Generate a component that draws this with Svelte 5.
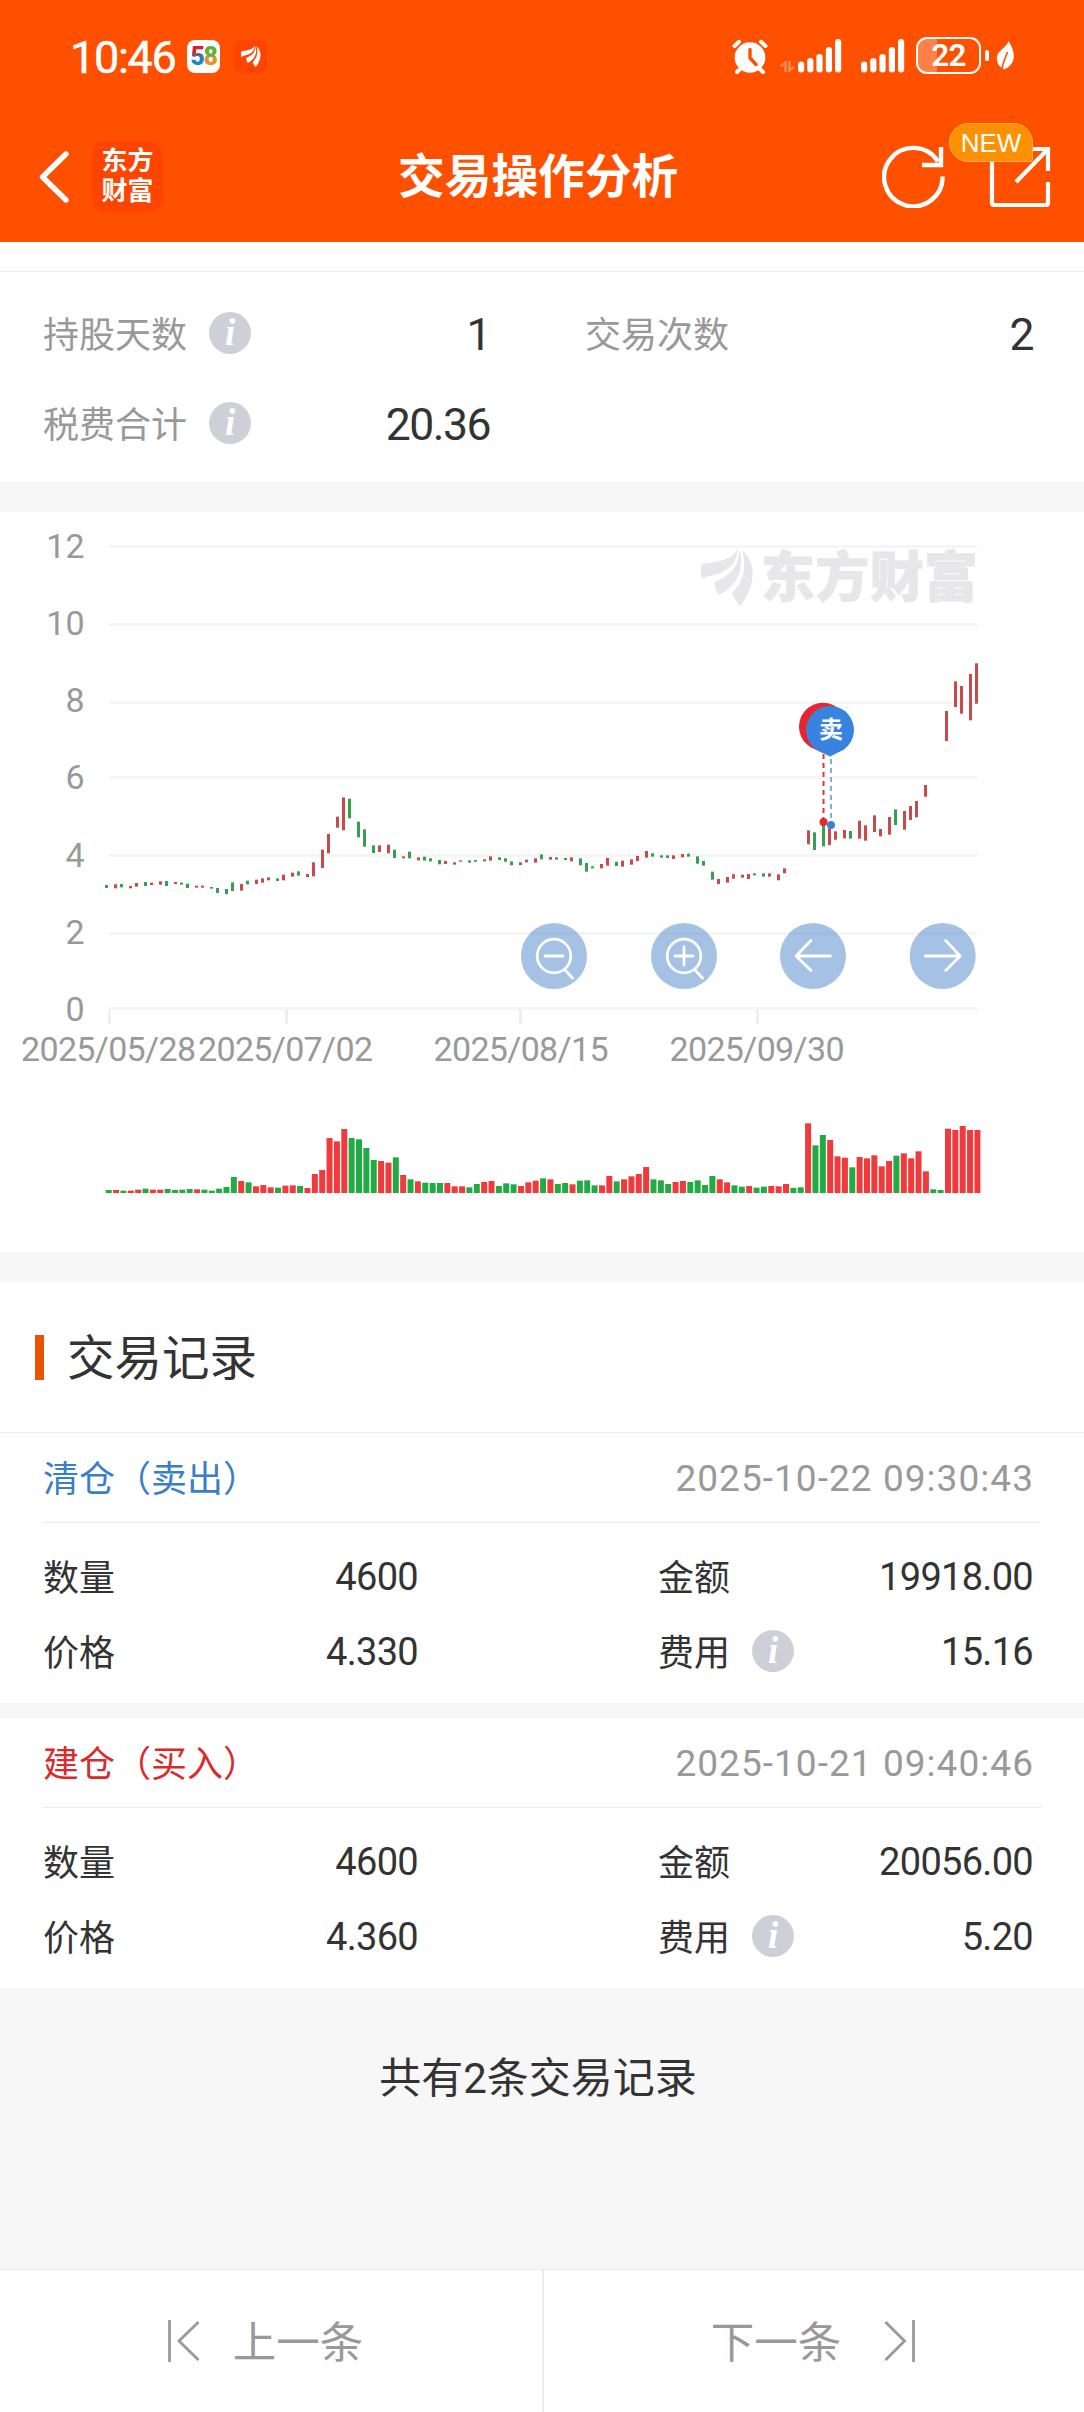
<script>
  const stats = [
    { label: "持股天数", info: true, value: "1" },
    { label: "交易次数", info: false, value: "2" },
    { label: "税费合计", info: true, value: "20.36" },
  ];

  const records = [
    { kind: "sell", title: "清仓（卖出）", time: "2025-10-22 09:30:43", qty: "4600", amount: "19918.00", price: "4.330", fee: "15.16" },
    { kind: "buy", title: "建仓（买入）", time: "2025-10-21 09:40:46", qty: "4600", amount: "20056.00", price: "4.360", fee: "5.20" },
  ];

  const grid = [
    ["12", 34.5], ["10", 112.5], ["8", 190.5], ["6", 265.5], ["4", 343.5], ["2", 421.5], ["0", 496.5],
  ];
  const dates = [
    ["2025/05/28", 109.5, 108.5], ["2025/07/02", 286.5, 285.5], ["2025/08/15", 520.5, 521], ["2025/09/30", 757.5, 757],
  ];

  // candles: x, colour, high-low, in thirds of a pixel from the run's origin
  const runs = [
    { x: 90, y: 268, data: "49g315-324 76r313-325 94g312-322 121r318-325 139r309-320 166g306-318 184r308-315 211r304-314 229g303-318 256r306-312 274g308-314 292g311-324 319r317-323 337r317-323 364g321-326 382g324-339 409g327-342 427g307-333 454r312-332 472g302-313 499r299-312 517r295-308 535r292-301 562g295-303 580r284-301 607r278-290 625g274-287 652r282-291 670r247-289 697r209-264 715r162-220 742r110-143 760r52-151 778g56-115 805g125-172 823g148-200 850g196-219 868r196-216 895r194-220 913g209-234" },
    { x: 400, y: 268, data: "10r229-235 28g215-235 55r232-241 73g230-242 91g235-244 118g240-253 136r243-252 163r247-254 181r241-245 208g241-248 226g240-245 253r238-244 271r229-242 298g232-240 316g235-245 334g244-256 361r247-255 379r239-247 406r235-248 424g223-238 451r231-239 469g232-239 496g234-240 514r232-244 541g235-256 559g249-275 577g259-265 604r252-265 622r234-257 649g245-258 667r242-260 694r238-254 712r228-243 739r213-233 757g220-230 784g226-233 802g226-234 820r226-237 847r222-232 865g221-230 892g229-251 910g243-257 937g275-299 955r297-312" },
    { x: 680, y: 8, data: "142r1071-1088 160r1063-1076 187r1064-1073 205r1062-1077 223g1060-1066 250g1060-1070 268r1060-1070 295r1063-1081 313r1045-1060 385r931-973 403g937-990 430g915-979 448r925-975 466r934-959 493r930-955 511g933-956 538r902-956 556r916-962 583r886-936 601r927-949 628r891-944 646g868-915 673r873-929 691r858-900 709r843-892 736r795-830 799r573-663 826r484-561 844r498-581 871r462-601 889r430-551" },
  ];
  const candles = runs.flatMap((run) =>
    run.data.split(" ").map((item) => {
      const [, x, dir, top, bottom] = item.match(/(\d+)([rg])(\d+)-(\d+)/);
      return { x: Math.floor(run.x + x / 3 - 1), y: run.y + top / 3, h: (bottom - top) / 3, dir };
    })
  );

  // volume bars: height in thirds of a pixel
  const volumes = (
    "g9 r9 g7 r7 r10 g13 r10 r10 g12 g9 g10 g12 r11 g10 g7 g13 g18 g48 r36 g32 r20 r24 r17 g16 r22 r23 g21 r15 r57 r69 " +
    "r165 r155 r192 g165 g161 g135 g99 r96 r91 g107 r54 g41 r35 g31 g30 g30 r30 r20 r20 g17 g27 r33 r36 g21 g29 g26 r21 r32 r37 " +
    "g44 r41 g27 g30 r26 g37 g38 g23 r23 r51 g35 r41 r50 r57 r78 g41 g38 g27 r33 r36 g33 g38 g24 g51 r41 r32 g23 g19 r21 g16 g19 r21 r20 r27 g15 g17 " +
    "r209 g143 g174 r159 r110 r106 g77 r108 r104 r113 r80 r96 g112 r119 r104 r125 r65 g11 g9 r193 r189 r201 r189 r189"
  ).split(" ").map((v, i) => ({ dir: v[0], h: v.slice(1) / 3, x: 105.7 + i * 7.362 }));

  const bars = [[0, 22.5], [9.2, 19], [18.4, 15], [27.8, 8], [37, 0]];
</script>

{#snippet wings()}
  <path d="M1 15C22 13 34 8 36 0C37 14 28 20 19 24C13 26 7 27 1 30C-.5 25-.5 19 1 15Z" />
  <path d="M38 1C42 12 40 22 36 29C33 36 25 42 18 46C15 42 13 37 14 33C28 26 38 20 38 1Z" />
  <path d="M41 1C54 12 57 34 39 57C36 53 32 48 31 44C40 35 47 22 41 1Z" />
{/snippet}

{#snippet signal()}
  <svg class="signal" width="44" height="34" fill="#fff">
    {#each bars as [x, y]}<rect {x} {y} width="6.2" height={33.5 - y} rx="3" />{/each}
  </svg>
{/snippet}

<div class="page">
  <header>
    <div class="statusbar">
      <span class="clock">10:46</span>
      <span class="app58"><b class="five">5</b><b class="eight">8</b></span>
      <span class="appdf"><svg width="20" height="23" viewBox="0 0 53 58" fill="#fff">{@render wings()}</svg></span>
      <span class="spacer"></span>
      <svg class="alarm" width="36" height="36" viewBox="0 0 36 36" stroke="#fff" stroke-linecap="round" fill="none">
        <path d="M2.5 7L7 2.8M33.5 7L29 2.8" stroke-width="4" />
        <path d="M8 30L5 33M28 30L31 33" stroke-width="4" />
        <circle cx="18" cy="18.5" r="15.3" fill="#fff" stroke="none" />
        <path d="M18 10.5V19L24 25.5" stroke="#ff5000" stroke-width="3.4" />
      </svg>
      <svg class="data" width="15" height="11" stroke="#ff8a55" stroke-width="2.6" fill="none">
        <path d="M1 5L5.500 1.500V11M9.500 0V9.500L14 6" />
      </svg>
      {@render signal()}
      {@render signal()}
      <span class="battery"><span>22</span></span>
      <i class="nub"></i>
      <svg class="leaf" width="18" height="29" viewBox="0 0 18 29">
        <path d="M12.500 0C18 8 19 16 16.500 21C14.500 25 11 27.500 7.500 28.500L6.500 26L5 26.500C1 23 0 18 1.500 14C3.500 8.500 10 7 12.500 0Z" fill="#fff" />
        <path d="M11.500 11C9.500 17 7 20 6 28" stroke="#ff5000" stroke-width="1.600" fill="none" />
      </svg>
    </div>
    <nav>
      <svg class="back" width="30" height="54" fill="none" stroke="#fff" stroke-width="5.400" stroke-linecap="round" stroke-linejoin="round">
        <path d="M27 3L3.500 26L27 49" />
      </svg>
      <span class="brand">东方<br />财富</span>
      <h1>交易操作分析</h1>
      <svg class="refresh" width="64" height="64" fill="none" stroke="#fff" stroke-width="4.400">
        <path d="M60.500 32.500A29.200 29.200 0 1 1 56 17.500" />
        <path d="M59 3V21H40" />
      </svg>
      <span class="share">
        <svg width="62" height="62" fill="none" stroke="#fff" stroke-width="4.200">
          <path d="M59 36V57Q59 59 57 59H5Q3 59 3 57V3H59V25M59 3L27 36" />
        </svg>
        <span class="new">NEW</span>
      </span>
    </nav>
  </header>

  <section class="stats">
    {#each stats as s}
      <div class="stat">
        <span class="label">{s.label}</span>
        {#if s.info}<span class="info">i</span>{/if}
        <span class="value">{s.value}</span>
      </div>
    {/each}
  </section>

  <section class="chart">
    <svg width="1084" height="740">
      <g class="axis">
        {#each grid as [label, y], i}
          <rect x="109" y={y - 1.5} width="868.500" height="3" fill="#f5f5f5" />
          <text x="84.500" y={45.700 + i * 77.200} text-anchor="end">{label}</text>
        {/each}
        {#each dates as [label, tick, x]}
          <rect x={tick - 1.5} y="498" width="3" height="14" fill="#eee" />
          <text {x} y="549" text-anchor="middle" textLength="175">{label}</text>
        {/each}
      </g>
      <g fill="#e6e6eb">
        <g transform="translate(701 37)">{@render wings()}</g>
        <text class="mark" x="761" y="85" textLength="217">东方财富</text>
      </g>
      {#each candles as c}
        <rect class={c.dir} x={c.x} y={c.y} width="3" height={c.h} />
      {/each}
      <g class="volume">
        {#each volumes as v}
          <rect class={v.dir} x={v.x} y={681 - v.h} width="6" height={v.h} />
        {/each}
      </g>

      <path d="M823.500 242V308" stroke="#d83a3a" stroke-width="2" stroke-dasharray="5 4" />
      <path d="M831 247V308" stroke="#85abd8" stroke-width="2" stroke-dasharray="5 4" />
      <circle cx="823.500" cy="310" r="4" fill="#e02a2e" />
      <circle cx="831" cy="313" r="4" fill="#3d80d8" />
      <path d="M823 241L811 235.500A24 24 0 1 1 835 235.500Z" fill="#e9252b" />
      <path d="M830 244.500L816 237.500A24 24 0 1 1 844 237.500Z" fill="#3983e0" />
      <text class="pin" x="831" y="226" text-anchor="middle">卖</text>

      <g fill="#4b83c7" fill-opacity=".5">
        {#each [554, 684, 813, 942.7] as cx}<circle {cx} cy="444" r="33" />{/each}
      </g>
      <g class="tool">
        <g transform="translate(554 444)"><circle r="16.800" /><path d="M-9 0H9M10.500 13.500L18.500 22" /></g>
        <g transform="translate(684 444)"><circle r="16.800" /><path d="M-9 0H9M0-9V9M10.500 13.500L18.500 22" /></g>
        <path transform="translate(813 444)" d="M17.500 0H-17M-2-15.500L-17 0L-2 14.500" />
        <path transform="translate(942.7 444)" d="M-17.500 0H17.500M3-15.500L17.500 0L3 14.500" />
      </g>
    </svg>
  </section>

  <section class="records">
    <h2><span>交易记录</span></h2>
    {#each records as r}
      <article>
        <div class="head">
          <span class={r.kind}>{r.title}</span>
          <time>{r.time}</time>
        </div>
        <div class="body">
          <div><span class="name">数量</span><span class="num">{r.qty}</span></div>
          <div><span class="name">金额</span><span class="num">{r.amount}</span></div>
          <div><span class="name">价格</span><span class="num">{r.price}</span></div>
          <div><span class="name">费用</span><span class="info">i</span><span class="num">{r.fee}</span></div>
        </div>
      </article>
    {/each}
  </section>

  <p class="total">共有2条交易记录</p>

  <footer>
    <button>
      <svg width="34" height="44"><path d="M3.500 1V43M32.500 3L13 22L32.500 41" /></svg>
      <span>上一条</span>
    </button>
    <button>
      <span>下一条</span>
      <svg width="34" height="44"><path d="M30.500 1V43M2.500 3L21.500 22L2.500 41" /></svg>
    </button>
  </footer>
</div>

<style>
  :global(body) { background: #f7f7f8; }
  .page {
    display: flex; flex-direction: column;
    width: 1084px; height: 2412px; overflow: hidden;
    background: #f7f7f8; color: #333;
    font-family: Roboto, "Noto Sans CJK SC", sans-serif; font-size: 36px;
  }
  * { box-sizing: border-box; }
  svg { display: block; flex: none; }

  header { height: 242px; flex: none; background: #ff5000; color: #fff; }
  .statusbar { display: flex; align-items: center; height: 113px; padding-left: 70px; padding-right: 70px; }
  .clock { width: 117px; padding-top: 2px; font-size: 45px; font-weight: 400; letter-spacing: -1.3px; -webkit-text-stroke: .5px #fff; }
  .app58, .appdf {
    display: flex; align-items: center; justify-content: center;
    width: 33px; height: 33px; border-radius: 8px;
  }
  .app58 { background: #fff; font: 900 25px/33px Roboto, sans-serif; letter-spacing: -1.5px; }
  .five, .eight { background-clip: text; color: transparent; }
  .five { background-image: linear-gradient(#d8232f 42%, #1787c4 48%); }
  .eight { background-image: linear-gradient(#5cb531 46%, #e8912d 54%); }
  .appdf { margin-left: 14px; background: #ff4400; }
  .spacer { flex: 1; }
  .data { margin: 19px 3px 0 12px; }
  .alarm + .data + .signal { margin-right: 18.500px; }
  .signal { margin-top: -1px; }
  .battery {
    display: flex; align-items: center; justify-content: center;
    width: 65px; height: 37px; margin: -2px 0 0 11.500px;
    border: 2.500px solid #fff; border-radius: 11px;
    background: linear-gradient(90deg, #ff8048 31%, transparent 31%);
    font-size: 31.500px; font-weight: 600; letter-spacing: -.8px;
  }
  .nub { width: 4px; height: 11px; margin: -2px 7px 0 4px; border-radius: 2px; background: #fff; }
  .leaf { margin-top: -3px; }

  nav { display: flex; align-items: center; height: 129px; padding: 0 33px 0 39px; }
  .brand {
    width: 71px; height: 71px; margin: -2px 0 0 23px; padding-top: 5px;
    border-radius: 15px; background: #ff4400;
    font-size: 26px; font-weight: 600; line-height: 30px; text-align: center;
  }
  h1 { margin: -1px 0 0 235px; font-size: 46.700px; font-weight: 700; line-height: 60px; white-space: nowrap; }
  .refresh { margin-left: auto; margin-top: -3px; }
  .share { position: relative; margin: -2px 0 0 43px; }
  .new {
    position: absolute; left: -40px; top: -23px;
    width: 84px; height: 39px; border: 1px solid #ffb060; border-radius: 20px 20px 3px 20px;
    background: #ff9000; font: 26px/38px "Liberation Sans", sans-serif; text-align: center;
  }

  .stats {
    display: grid; grid-template-columns: 447px 448px; grid-auto-rows: 90px; column-gap: 95px;
    height: 240px; flex: none; padding: 46px 43px 0;
    background: linear-gradient(#ebebeb, #ebebeb) 0 29px / 100% 1px no-repeat #fff;
  }
  .stat { display: flex; align-items: center; }
  .label { margin-top: -3px; color: #999; }
  .info {
    width: 42px; height: 42px; margin-left: 22px; border-radius: 50%;
    background: #cdd0d6; color: #fff; text-align: center;
    font: italic 700 37px/41px "Liberation Serif", serif;
  }
  .value { margin-left: auto; padding-top: 3px; font-size: 44.500px; letter-spacing: -1.5px; }

  .chart { height: 740px; flex: none; margin-top: 30px; background: #fff; }
  .axis text { fill: #999; font-size: 34px; }
  .mark { font-size: 54px; font-weight: 900; stroke: #e6e6eb; stroke-width: .8px; }
  .pin { fill: #fff; font-size: 24px; font-weight: 700; }
  .r { fill: #c94a4a; }
  .g { fill: #35a050; }
  .volume .r { fill: #f03a3c; }
  .volume .g { fill: #22aa44; }
  .tool { fill: none; stroke: #fff; stroke-width: 2.800; stroke-linecap: round; stroke-linejoin: round; }

  .records { margin-top: 30px; background: #fff; }
  h2 {
    display: flex; align-items: center; gap: 23px;
    height: 150px; margin: 0; padding-left: 35px;
    font-size: 47.500px; font-weight: 400;
  }
  h2::before { content: ""; width: 9px; height: 45px; background: #e85400; }
  h2 span { margin-top: -5px; }
  article { height: 271px; border-top: 1px solid #ebebeb; }
  article + article { height: 285px; border-top: 15px solid #f7f7f8; }
  .head {
    display: flex; align-items: center; justify-content: space-between;
    height: 90px; margin: 0 43px; padding-right: 8px;
    border-bottom: 1px solid #ebebeb;
  }
  .sell, .buy, .name { margin-top: -3px; }
  .sell { color: #3a7dcc; }
  .buy { color: #d92b2b; }
  time { padding-top: 2px; color: #999; font-size: 37px; letter-spacing: 1.050px; margin-right: -1px; }
  .body { display: grid; grid-template-columns: 375px 375px; column-gap: 240px; grid-auto-rows: 75px; padding: 16px 43px 0; }
  .body div { display: flex; align-items: center; }
  .body .info { margin-top: -1px; }
  .num { margin-left: auto; font-size: 38px; letter-spacing: -.7px; }

  .total { margin: 61px 8px 0 0; text-align: center; font-size: 42px; line-height: 60px; }

  footer { display: grid; grid-template-columns: 1fr 1fr; height: 143px; margin-top: auto; border-top: 1px solid #ebebeb; background: #fff; }
  button {
    display: flex; align-items: center; justify-content: center; gap: 33px;
    padding: 0 13px 0 0; border: 0; background: none; color: #999; font: inherit; font-size: 43.500px;
  }
  button + button { gap: 42px; padding: 0; border-left: 2px solid #ebebeb; }
  button span { margin-top: -4px; }
  button path { fill: none; stroke: #999; stroke-width: 2.800; }
</style>
